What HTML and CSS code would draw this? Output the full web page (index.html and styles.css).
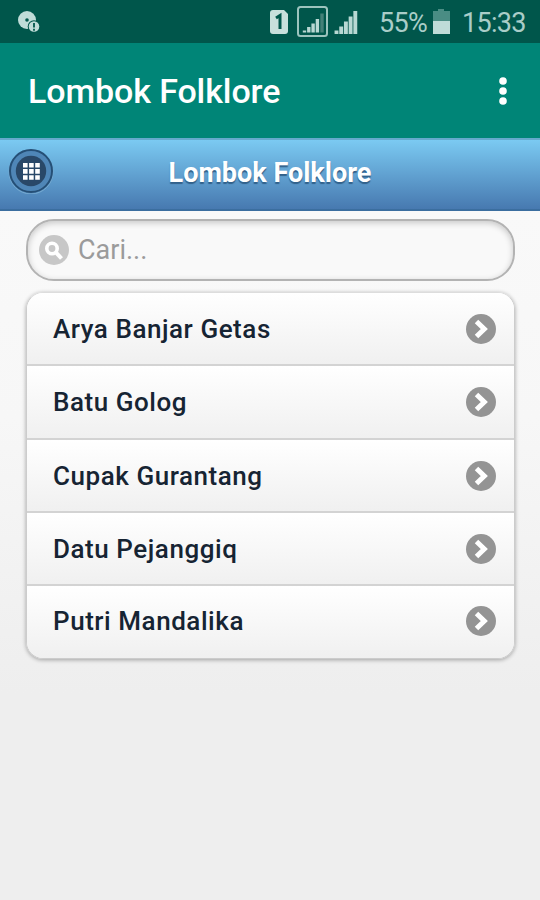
FILE: index.html
```html
<!DOCTYPE html>
<html lang="id">
<head>
<meta charset="utf-8">
<title>Lombok Folklore</title>
<link rel="stylesheet" href="styles.css">
</head>
<body>
<svg width="0" height="0" class="defs">
  <symbol id="arrow" viewBox="0 0 30 30"><circle cx="15" cy="15" r="15" fill="#949494"/><path d="M10.500 7.500 18.300 15l-7.800 7.500" fill="none" stroke="#fff" stroke-width="5"/></symbol>
</svg>
<div class="status">
  <svg class="notice" width="24" height="24" viewBox="0 0 24 24"><circle cx="9" cy="9" r="9" fill="#bfdcd8"/><circle cx="9" cy="9" r="1.8" fill="#00564b"/><circle cx="16" cy="15.500" r="6.300" fill="#00564b"/><circle cx="16" cy="15.500" r="5.300" fill="#bfdcd8"/><path d="M16 12v4.500M16 17.700v2" stroke="#00564b" stroke-width="1.800"/></svg>
  <svg class="signals" width="92" height="32" viewBox="0 0 92 32">
    <path d="M4 4h11l4 4v17q0 3-3 3H4q-3 0-3-3V7q0-3 3-3z" fill="#c8e0dc"/>
    <path d="M7 12l4-2.500V23" fill="none" stroke="#00564b" stroke-width="3"/>
    <rect x="29" y="1" width="29" height="29" rx="2.500" fill="none" stroke="#9cc4be" stroke-width="2"/>
    <path d="M35.500 24.500v2M39.800 21v5.500M44.100 17.500v9M48.400 13v13.500" stroke="#b8d8d3" stroke-width="3.400"/>
    <path d="M53 7.500v19" stroke="#448078" stroke-width="3.400"/>
    <path d="M67.500 24.500v3.500M72.200 20.500V28M76.900 15.500V28M81.600 10.500V28M86.300 5V28" stroke="#b8d8d3" stroke-width="3.900"/>
  </svg>
  <span class="percent">55%</span>
  <svg class="battery" width="17" height="25" viewBox="0 0 17 25"><path d="M0 2h5V0h6v2h6v10H0z" fill="#4a8d84"/><path d="M0 12h17v13H0z" fill="#bfdcd8"/></svg>
  <span class="clock">15:33</span>
</div>
<header class="appbar">
  <h1>Lombok Folklore</h1>
  <svg width="8" height="28" viewBox="0 0 8 28" fill="#fff"><circle cx="4" cy="4" r="3.800"/><circle cx="4" cy="14" r="3.800"/><circle cx="4" cy="24" r="3.800"/></svg>
</header>
<div class="toolbar">
  <button class="grid" aria-label="Menu"><svg width="46" height="46" viewBox="0 0 46 46"><circle cx="23" cy="24" r="22" fill="none" stroke="#77abd1"/><circle cx="23" cy="23" r="21" fill="#4f86b7" stroke="#254f76" stroke-width="2"/><circle cx="23" cy="23" r="15.200" fill="#294868"/><path d="M15 15h4.600v4.600H15zM21.100 15h4.600v4.600h-4.600zM27.200 15h4.600v4.600h-4.600zM15 21.100h4.600v4.600H15zM21.100 21.100h4.600v4.600h-4.600zM27.200 21.100h4.600v4.600h-4.600zM15 27.200h4.600v4.600H15zM21.100 27.200h4.600v4.600h-4.600zM27.200 27.200h4.600v4.600h-4.600z" fill="#fff"/></svg></button>
  <h2>Lombok Folklore</h2>
</div>
<main>
  <div class="search">
    <svg width="30" height="30" viewBox="0 0 30 30"><circle cx="15" cy="15" r="15" fill="#c7c7c7"/><circle cx="13" cy="13.500" r="5.200" fill="none" stroke="#fff" stroke-width="3.600"/><path d="M17 17.500l5.500 6" stroke="#fff" stroke-width="4"/></svg>
    <span>Cari...</span>
  </div>
  <ul>
    <li><span>Arya Banjar Getas</span><svg><use href="#arrow"/></svg></li>
    <li><span>Batu Golog</span><svg><use href="#arrow"/></svg></li>
    <li><span>Cupak Gurantang</span><svg><use href="#arrow"/></svg></li>
    <li><span>Datu Pejanggiq</span><svg><use href="#arrow"/></svg></li>
    <li><span>Putri Mandalika</span><svg><use href="#arrow"/></svg></li>
  </ul>
</main>
</body>
</html>
```
FILE: styles.css
```css
* { box-sizing: border-box; }
body { margin: 0; height: 900px; overflow: hidden; display: flex; flex-direction: column; font-family: Roboto, sans-serif; background: #eee; }
.defs { position: absolute; }
h1, h2, ul { margin: 0; padding: 0; }
svg { display: block; flex: none; }
.status { height: 43px; flex: none; background: #00564b; display: flex; align-items: flex-start; color: #a9cdc8; font-size: 27px; line-height: 32px; }
.notice { margin: 11px 0 0 18px; }
.signals { margin: 6px 0 0 227px; }
.percent { margin: 7px 0 0 18px; width: 49px; letter-spacing: -0.7px; }
.battery { margin: 9px 0 0 5px; }
.clock { margin: 7px 0 0 12px; letter-spacing: -0.7px; }
.appbar { height: 95px; flex: none; background: #008577; display: flex; align-items: center; justify-content: space-between; padding: 0 33px 0 28px; color: #fff; }
h1 { font-size: 34px; font-weight: 500; line-height: 40px; letter-spacing: -0.1px; }
.toolbar { height: 73px; flex: none; border-top: 2px solid #66a9cc; border-bottom: 2px solid #3b6e9f; background: linear-gradient(#7bcaf2, #4779b0); display: flex; align-items: center; padding-left: 8px; }
.grid { border: 0; padding: 0 0 7px; background: none; }
h2 { flex: 1; margin: 0 54px 4px 0; text-align: center; color: #fff; font-size: 27px; line-height: 32px; font-weight: 700; text-shadow: 0 2px 1px #31618b; }
main { flex: 1; padding: 8px 25px 0 26px; background: linear-gradient(#f9f9f9, #f7f7f7 30%, #eee 70%); }
.search { height: 62px; border: 2px solid #b3b3b3; border-radius: 28px; background: #f9f9f9; box-shadow: inset 0 2px 6px #0003; display: flex; align-items: center; padding: 0 11px 1px; gap: 9px; color: #9b9b9b; font-size: 27px; }
ul { list-style: none; margin-top: 11px; border: 1px solid #ccc; border-top-color: #ddd; border-radius: 17px; overflow: hidden; box-shadow: 0 1px 4px #0005; }
li { height: 73px; display: flex; align-items: center; justify-content: space-between; padding: 0 18px 0 26px; background: linear-gradient(#fff, #f0f0f0); font-size: 26px; font-weight: 500; letter-spacing: 0.55px; color: #162433; }
li:first-child { height: 71px; }
li:nth-child(2) { height: 74px; padding-bottom: 1px; }
li:last-child { height: 74px; padding-bottom: 2px; }
li + li { border-top: 2px solid #d3d3d3; }
li svg { width: 30px; height: 30px; }
```
